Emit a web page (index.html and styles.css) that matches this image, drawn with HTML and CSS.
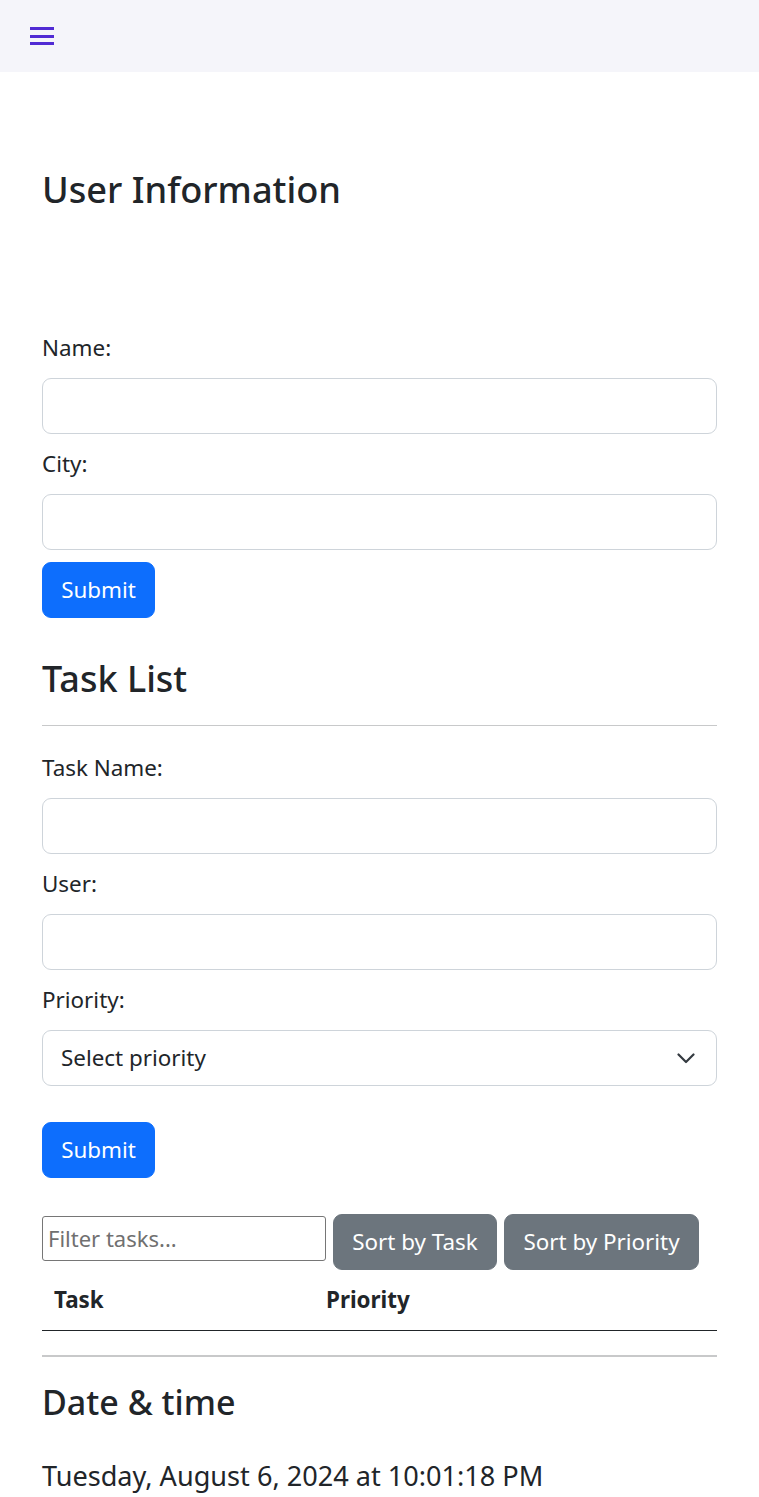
FILE: index.html
```html
<!DOCTYPE html>
<html lang="en">
<head>
<meta charset="utf-8">
<title>User Information</title>
<link rel="stylesheet" href="styles.css">
</head>
<body>
<header class="topbar">
  <button class="menu-toggle" type="button" aria-label="Menu">
    <svg width="24" height="18" viewBox="0 0 24 18" aria-hidden="true">
      <rect x="0" y="0" width="24" height="3" fill="#512bd4"/>
      <rect x="0" y="8" width="24" height="3" fill="#512bd4"/>
      <rect x="0" y="15" width="24" height="3" fill="#512bd4"/>
    </svg>
  </button>
</header>
<main class="content">
  <h1 class="page-title">User Information</h1>

  <form class="user-form">
    <label class="field-label" for="name">Name:</label>
    <input class="field-input" id="name" type="text">
    <label class="field-label" for="city">City:</label>
    <input class="field-input" id="city" type="text">
    <button class="btn btn-primary" type="button">Submit</button>
  </form>

  <h2 class="section-title">Task List</h2>
  <hr class="rule rule-first">

  <form class="task-form">
    <label class="field-label" for="task">Task Name:</label>
    <input class="field-input" id="task" type="text">
    <label class="field-label" for="user">User:</label>
    <input class="field-input" id="user" type="text">
    <label class="field-label" for="priority">Priority:</label>
    <div class="select-wrap">
      <select class="field-select" id="priority">
        <option>Select priority</option>
      </select>
      <svg class="select-chevron" width="18" height="11" viewBox="0 0 18 11" aria-hidden="true">
        <path d="M1.5 1.5l7.5 7.5 7.5-7.5" fill="none" stroke="#343a40" stroke-width="2.2" stroke-linecap="round" stroke-linejoin="round"/>
      </svg>
    </div>
    <button class="btn btn-primary submit-task" type="button">Submit</button>
  </form>

  <div class="toolbar">
    <input class="filter-input" type="text" placeholder="Filter tasks...">
    <button class="btn btn-secondary sort-task" type="button">Sort by Task</button>
    <button class="btn btn-secondary sort-priority" type="button">Sort by Priority</button>
  </div>

  <table class="task-table">
    <thead>
      <tr><th class="col-task">Task</th><th>Priority</th></tr>
    </thead>
    <tbody></tbody>
  </table>

  <hr class="rule rule-thick">

  <h3 class="sub-title">Date &amp; time</h3>
  <p class="datetime">Tuesday, August 6, 2024 at 10:01:18 PM</p>
</main>
</body>
</html>
```

FILE: styles.css
```css
* { box-sizing: border-box; }

html, body {
  margin: 0;
  padding: 0;
}

body {
  font-family: "Noto Sans", "Open Sans", Arial, sans-serif;
  font-size: 22.4px;
  line-height: 36px;
  color: #212529;
  background: #ffffff;
}

.topbar {
  height: 72px;
  background: #f5f5fa;
  display: flex;
  align-items: center;
  padding-left: 30px;
}

.menu-toggle {
  border: 0;
  padding: 0;
  background: transparent;
  width: 24px;
  height: 18px;
  display: block;
}

.menu-toggle svg { display: block; }

.content {
  padding: 91px 42px 40px;
}

.page-title {
  font-size: 36.2px;
  font-weight: 500;
  line-height: 53.3px;
  margin: 0 0 114px;
}

.user-form, .task-form {
  display: flex;
  flex-direction: column;
  align-items: flex-start;
}

.field-label {
  display: block;
  margin: 0 0 12px;
}

.field-input {
  display: block;
  width: 100%;
  height: 56px;
  border: 1.5px solid #ced4da;
  border-radius: 9px;
  padding: 9px 18px;
  font: inherit;
  color: #212529;
  background: #fff;
  margin: 0 0 12px;
}

.select-wrap {
  position: relative;
  width: 100%;
  margin-bottom: 36px;
}

.field-select {
  display: block;
  width: 100%;
  height: 56px;
  border: 1.5px solid #ced4da;
  border-radius: 9px;
  padding: 0 54px 0 18px;
  font: inherit;
  color: #212529;
  background: #fff;
  appearance: none;
  -webkit-appearance: none;
}

.select-chevron {
  position: absolute;
  right: 22px;
  top: 23px;
  pointer-events: none;
}

.btn {
  font: inherit;
  line-height: 36px;
  border: 1.5px solid transparent;
  border-radius: 9px;
  padding: 8.5px 0;
  height: 56px;
  color: #fff;
  cursor: pointer;
}

.btn-primary {
  background: #0d6efd;
  border-color: #0d6efd;
  width: 113px;
}

.btn-secondary {
  background: #6c757d;
  border-color: #6c757d;
}

.section-title {
  font-size: 36px;
  font-weight: 500;
  line-height: 46.3px;
  margin: 38px 0 0;
}

.rule {
  border: 0;
  border-top: 1.5px solid #c8c9ca;
  margin: 24px 0;
}

.rule-first {
  margin-top: 22px;
}

.rule-thick {
  border-top-width: 2px;
}

.submit-task { margin-bottom: 36px; }

.toolbar {
  display: flex;
  align-items: flex-start;
  gap: 7px;
}

.filter-input {
  width: 284px;
  height: 45px;
  margin-top: 2px;
  font-family: "Noto Sans", "Open Sans", Arial, sans-serif;
  font-size: 22px;
  border: 1.5px solid #767676;
  border-radius: 3px;
  padding: 1px 5px;
  color: #212529;
}

.filter-input::placeholder { color: #707070; }

.sort-task { width: 164px; }
.sort-priority { width: 195px; }

.task-table {
  width: 100%;
  border-collapse: collapse;
  margin-bottom: 24px;
}

.task-table th {
  text-align: left;
  font-weight: 700;
  padding: 12px 12px;
  border-bottom: 1px solid #212529;
}

.col-task { width: 272px; }

.sub-title {
  font-size: 34px;
  font-weight: 500;
  line-height: 42.9px;
  margin: 0;
}

.datetime {
  font-size: 27.1px;
  line-height: 45px;
  margin: 29px 0 0;
}
```
